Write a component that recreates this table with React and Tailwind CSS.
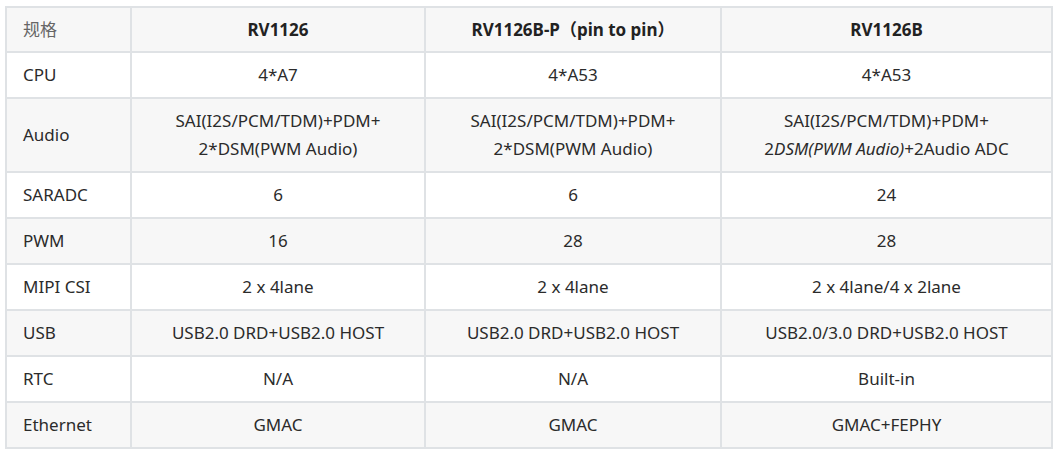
const header = ["规格", "RV1126", "RV1126B-P（pin to pin）", "RV1126B"];

const rows = [
  ["CPU", "4*A7", "4*A53", "4*A53"],
  [
    "Audio",
    <>SAI(I2S/PCM/TDM)+PDM+<br />2*DSM(PWM Audio)</>,
    <>SAI(I2S/PCM/TDM)+PDM+<br />2*DSM(PWM Audio)</>,
    <>SAI(I2S/PCM/TDM)+PDM+<br />2<i>DSM(PWM Audio)</i>+2Audio ADC</>,
  ],
  ["SARADC", "6", "6", "24"],
  ["PWM", "16", "28", "28"],
  ["MIPI CSI", "2 x 4lane", "2 x 4lane", "2 x 4lane/4 x 2lane"],
  ["USB", "USB2.0 DRD+USB2.0 HOST", "USB2.0 DRD+USB2.0 HOST", "USB2.0/3.0 DRD+USB2.0 HOST"],
  ["RTC", "N/A", "N/A", "Built-in"],
  ["Ethernet", "GMAC", "GMAC", "GMAC+FEPHY"],
];

export default function App() {
  return (
    <div
      className="bg-white w-[1057px] h-[455px] pt-[6px] pl-[5px] text-[17px] text-[#2b2b2b]"
      style={{ fontFamily: '"Noto Sans", "Open Sans", "Noto Sans CJK SC", sans-serif' }}
    >
      <table className="table-fixed border-collapse w-[1046px]">
        <colgroup>
          <col className="w-[125px]" />
          <col className="w-[294px]" />
          <col className="w-[296px]" />
          <col className="w-[331px]" />
        </colgroup>
        <thead>
          <tr className="bg-[#f7f7f7]">
            {header.map((h, i) => (
              <th
                key={i}
                className={
                  "border-2 border-[#dfe2e5] px-4 py-2 leading-[27px] " +
                  (i === 0 ? "text-left font-normal text-[#666]" : "text-center font-bold text-[#222]")
                }
              >
                {h}
              </th>
            ))}
          </tr>
        </thead>
        <tbody>
          {rows.map((r, ri) => (
            <tr key={ri} className={ri % 2 === 1 ? "bg-[#f7f7f7]" : "bg-white"}>
              {r.map((c, ci) => (
                <td
                  key={ci}
                  className={
                    "border-2 border-[#dfe2e5] px-4 py-2 leading-[28px] " +
                    (ci === 0 ? "text-left" : "text-center")
                  }
                >
                  {c}
                </td>
              ))}
            </tr>
          ))}
        </tbody>
      </table>
    </div>
  );
}
